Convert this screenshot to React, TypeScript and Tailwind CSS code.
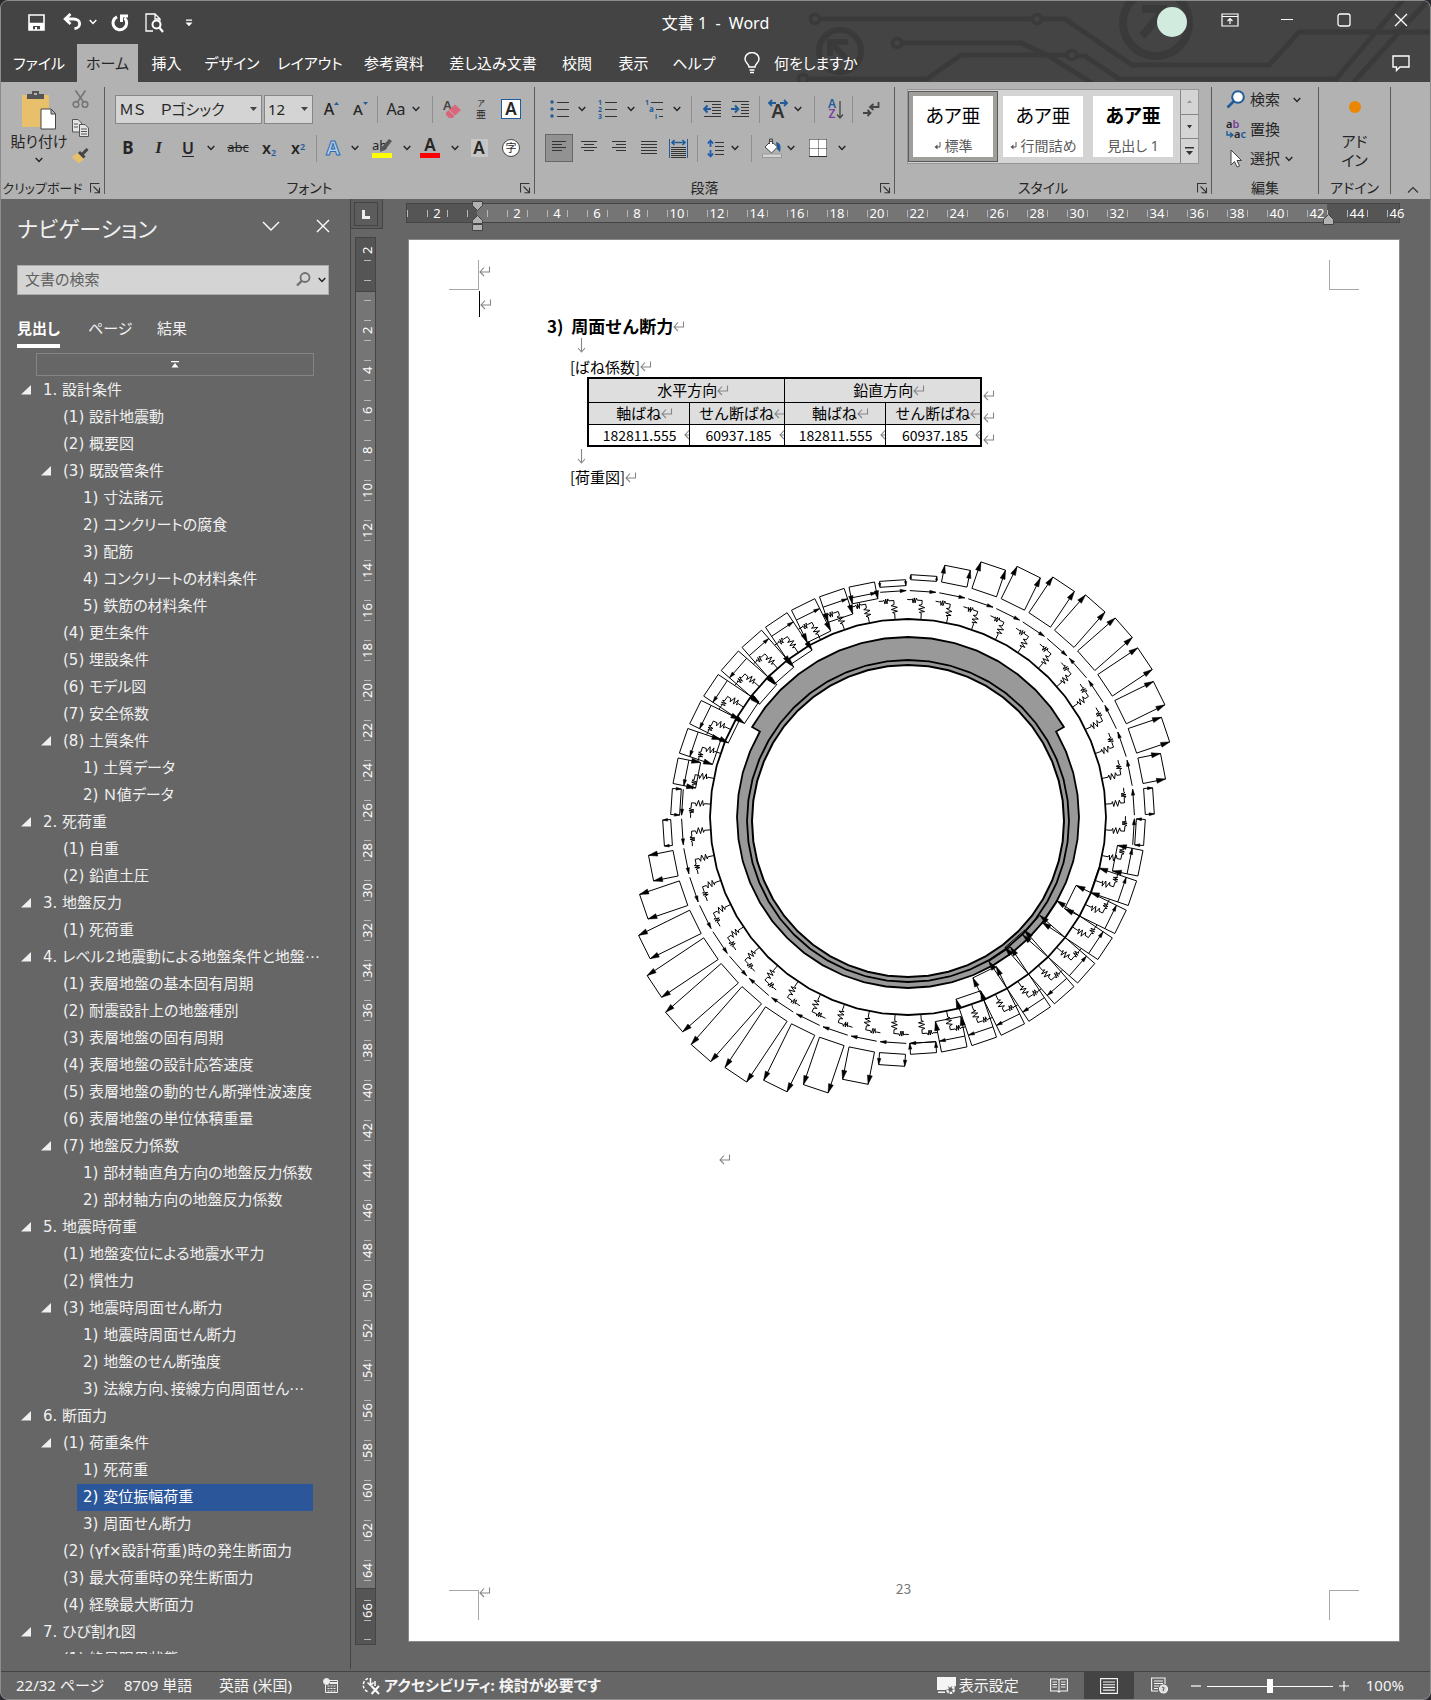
import React, { useState } from "react";

interface NavItem {
  level: number;
  text: string;
  open?: boolean;
}

const navItems: NavItem[] = [
  { level: 0, text: "1. 設計条件", open: true },
  { level: 1, text: "(1) 設計地震動" },
  { level: 1, text: "(2) 概要図" },
  { level: 1, text: "(3) 既設管条件", open: true },
  { level: 2, text: "1) 寸法諸元" },
  { level: 2, text: "2) コンクリートの腐食" },
  { level: 2, text: "3) 配筋" },
  { level: 2, text: "4) コンクリートの材料条件" },
  { level: 2, text: "5) 鉄筋の材料条件" },
  { level: 1, text: "(4) 更生条件" },
  { level: 1, text: "(5) 埋設条件" },
  { level: 1, text: "(6) モデル図" },
  { level: 1, text: "(7) 安全係数" },
  { level: 1, text: "(8) 土質条件", open: true },
  { level: 2, text: "1) 土質データ" },
  { level: 2, text: "2) Ｎ値データ" },
  { level: 0, text: "2. 死荷重", open: true },
  { level: 1, text: "(1) 自重" },
  { level: 1, text: "(2) 鉛直土圧" },
  { level: 0, text: "3. 地盤反力", open: true },
  { level: 1, text: "(1) 死荷重" },
  { level: 0, text: "4. レベル２地震動による地盤条件と地盤⋯", open: true },
  { level: 1, text: "(1) 表層地盤の基本固有周期" },
  { level: 1, text: "(2) 耐震設計上の地盤種別" },
  { level: 1, text: "(3) 表層地盤の固有周期" },
  { level: 1, text: "(4) 表層地盤の設計応答速度" },
  { level: 1, text: "(5) 表層地盤の動的せん断弾性波速度" },
  { level: 1, text: "(6) 表層地盤の単位体積重量" },
  { level: 1, text: "(7) 地盤反力係数", open: true },
  { level: 2, text: "1) 部材軸直角方向の地盤反力係数" },
  { level: 2, text: "2) 部材軸方向の地盤反力係数" },
  { level: 0, text: "5. 地震時荷重", open: true },
  { level: 1, text: "(1) 地盤変位による地震水平力" },
  { level: 1, text: "(2) 慣性力" },
  { level: 1, text: "(3) 地震時周面せん断力", open: true },
  { level: 2, text: "1) 地震時周面せん断力" },
  { level: 2, text: "2) 地盤のせん断強度" },
  { level: 2, text: "3) 法線方向、接線方向周面せん⋯" },
  { level: 0, text: "6. 断面力", open: true },
  { level: 1, text: "(1) 荷重条件", open: true },
  { level: 2, text: "1) 死荷重" },
  { level: 2, text: "2) 変位振幅荷重" },
  { level: 2, text: "3) 周面せん断力" },
  { level: 1, text: "(2) (γf×設計荷重)時の発生断面力" },
  { level: 1, text: "(3) 最大荷重時の発生断面力" },
  { level: 1, text: "(4) 経験最大断面力" },
  { level: 0, text: "7. ひび割れ図", open: true },
  { level: 1, text: "(1) 終局限界状態", open: true },
];

const tabs = [
  { name: "ファイル", width: "w-[76px]" },
  { name: "ホーム", width: "w-[61px]" },
  { name: "挿入", width: "w-[57px]" },
  { name: "デザイン", width: "w-[74px]" },
  { name: "レイアウト", width: "w-[82px]" },
  { name: "参考資料", width: "w-[86px]" },
  { name: "差し込み文書", width: "w-[112px]" },
  { name: "校閲", width: "w-[56px]" },
  { name: "表示", width: "w-[57px]" },
  { name: "ヘルプ", width: "w-[64px]" },
];

// Radial load per segment, clockwise from the crown. Negative = towards the pipe.
const loads = [
  5, 17, 28, 36, 43, 47, 50, 48, 43, 35, 23, 9,
  -9, -26, -40, -56, -67, -73, -75, -72, -64, -49, -31, -11,
  12, 33, 50, 63, 73, 77, 74, 68, 57, 42, 25, 8,
  -9, -23, -35, -43, -49, -51, -49, -45, -36, -27, -17, -6,
];

const CX = 908;
const CY = 817;

type Pt = [number, number];

// r = distance from centre, t = offset along the clockwise tangent
const polar = (deg: number, r: number, t = 0, cy = CY): Pt => {
  const a = (deg * Math.PI) / 180;
  return [
    CX + r * Math.sin(a) + t * Math.cos(a),
    cy - r * Math.cos(a) + t * Math.sin(a),
  ];
};

const line = (pts: Pt[]) => pts.map((p) => `${p[0].toFixed(1)},${p[1].toFixed(1)}`).join(" ");

const ring = (r: number, cy = CY) =>
  line(Array.from({ length: 48 }, (_, i) => polar(i * 7.5, r, 0, cy)));

const head = (from: Pt, to: Pt, size: number) => {
  const d = Math.hypot(to[0] - from[0], to[1] - from[1]) || 1;
  const ux = (to[0] - from[0]) / d;
  const uy = (to[1] - from[1]) / d;
  const bx = to[0] - ux * size;
  const by = to[1] - uy * size;
  const w = size * 0.28;
  return line([to, [bx - uy * w, by + ux * w], [bx + uy * w, by - ux * w]]);
};

const shellOuter = () => {
  const pts: Pt[] = [];
  for (let a = -60; a <= 60; a += 7.5) pts.push(polar(a, 180));
  for (let a = 60; a <= 300; a += 7.5) pts.push(polar(a, 171));
  return line(pts);
};

const LoadDiagram: React.FC = () => (
  <svg width="560" height="560" viewBox="620 550 560 560" fill="none" stroke="#000" strokeWidth="1" role="img" aria-label="荷重図">
    <polygon points={ring(198)} strokeWidth="1.8" />
    <polygon points={shellOuter()} fill="#999" strokeWidth="1.8" />
    <polygon points={ring(161, 821)} strokeWidth="1.8" />
    <polygon points={ring(156, 821)} fill="#fff" strokeWidth="2" />
    {loads.map((v, k) => {
      const a = 3.75 + k * 7.5;
      const base = 237;
      const l0 = polar(a, base, -13);
      const l1 = polar(a, base + v, -13);
      const r0 = polar(a, base, 13);
      const r1 = polar(a, base + v, 13);
      const size = Math.min(9, Math.abs(v) * 0.35 + 2);
      const cw = k < 6 || (k >= 18 && k < 30) || k >= 42;
      const s0 = polar(a, 226, cw ? -13 : 13);
      const s1 = polar(a, 226, cw ? 13 : -13);
      const spring: Pt[] = [
        [198, 0], [204, 0], [205, -2], [206, 3], [208, -3], [210, 3], [212, -3], [213, 0], [217, 0],
      ].map(([r, t]) => polar(a, r, t));
      const spring2: Pt[] = [
        [217, 0], [217, -5], [219, -6], [214, -7], [219, -8], [214, -9], [218, -10], [217, -11], [217, -15],
      ].map(([r, t]) => polar(a, r, t));
      return (
        <g key={k}>
          <polygon points={line([l0, l1, r1, r0])} />
          <polygon points={head(l0, l1, size)} fill="#000" strokeWidth="0.5" />
          <polygon points={head(r0, r1, size)} fill="#000" strokeWidth="0.5" />
          <polyline points={line([s0, s1])} />
          <polygon points={head(s0, s1, 6)} fill="#000" strokeWidth="0.5" />
          <polyline points={line(spring)} />
          <polyline points={line(spring2)} />
        </g>
      );
    })}
  </svg>
);

const Chevron: React.FC<{ className?: string }> = ({ className = "" }) => (
  <svg width="8" height="6" viewBox="0 0 8 6" fill="none" stroke="currentColor" strokeWidth="1.5" className={className}>
    <path d="M0.7 1 L4 4.4 L7.3 1" />
  </svg>
);

const Return: React.FC<{ className?: string }> = ({ className = "" }) => (
  <svg width="12" height="11" viewBox="0 0 12 11" fill="none" stroke="#868686" strokeWidth="1.1" className={`shrink-0 ${className}`}>
    <path d="M10.5 0.5 V6 H1 M5 1.5 L1 6 L5 10" />
  </svg>
);

const DownMark: React.FC = () => (
  <svg width="9" height="15" viewBox="0 0 9 15" fill="none" stroke="#868686" strokeWidth="1.1">
    <path d="M4.5 0 V14 M1 10 L4.5 14 L8 10" />
  </svg>
);

interface BtnProps {
  w: string;
  label: string;
  active?: boolean;
  children: React.ReactNode;
}

const Btn: React.FC<BtnProps> = ({ w, label, active, children }) => (
  <button
    aria-label={label}
    className={`${w} h-7 shrink-0 flex items-center justify-center ${active ? "bg-[#929292] border border-[#666]" : ""}`}
  >
    {children}
  </button>
);

const Sep: React.FC<{ w?: string }> = ({ w = "w-[9px]" }) => (
  <span className={`${w} shrink-0 flex justify-center`}>
    <span className="w-px h-[27px] bg-[#8e8e8e]" />
  </span>
);

const GroupLine: React.FC = () => <span className="w-px shrink-0 my-[5px] bg-[#5a5a5a]" />;

const Launcher: React.FC = () => (
  <button aria-label="オプション" className="absolute right-[3px] bottom-[5px]">
    <svg width="11" height="11" viewBox="0 0 11 11" fill="none" stroke="#333" strokeWidth="1.1">
      <path d="M0.5 9.5 V0.5 H9.5 M3.5 3.5 L9.5 9.5 M9.5 4.5 V9.8 H4.5" />
    </svg>
  </button>
);

const GroupLabel: React.FC<{ children: React.ReactNode; launcher?: boolean }> = ({ children, launcher }) => (
  <div className="relative mt-auto h-[22px] leading-[22px] text-sm text-center whitespace-nowrap">
    {children}
    {launcher && <Launcher />}
  </div>
);

// horizontal strokes of the alignment icons, as [x1, x2] pairs
const Lines: React.FC<{ rows: number[][]; step?: number }> = ({ rows, step = 3 }) => (
  <svg width="18" height="16" viewBox="0 0 18 16" stroke="#333" strokeWidth="1">
    {rows.map(([x1, x2], i) => (
      <path key={i} d={`M${x1} ${1.5 + i * step} H${x2}`} />
    ))}
  </svg>
);

const TitleArt: React.FC = () => (
  <svg width="640" height="81" viewBox="791 1 640 81" className="absolute right-0 top-0" fill="none" stroke="#3a3a3a" strokeWidth="5">
    <circle cx="816" cy="19" r="4.5" strokeWidth="3.5" />
    <path d="M821 19 H1033 M1042 19 H1066 L1133 65 H1270 L1300 32 H1431" />
    <circle cx="1038" cy="19" r="4.5" strokeWidth="3.5" />
    <circle cx="898" cy="43" r="4.5" strokeWidth="3.5" />
    <path d="M903 43 H1022 L1048 55 L1093 83" />
    <circle cx="804" cy="79" r="4.5" strokeWidth="3.5" />
    <path d="M809 79 H928 L962 55 H1068 M1078 56 H1086 L1120 79 H1337 L1404 0 M1354 83 L1431 -2" />
    <circle cx="1073" cy="55" r="4.5" strokeWidth="3.5" />
    <circle cx="841" cy="51" r="21" strokeWidth="6" />
    <path d="M831 56 V42 H849 M832 43 L850 61" strokeWidth="6" />
    <circle cx="1157" cy="23" r="33" strokeWidth="8" />
    <path d="M1143 9 H1168 M1163 13 L1143 36" strokeWidth="8" />
  </svg>
);

const TitleBar: React.FC = () => (
  <div className="relative h-[43px] flex items-center pl-[27px] text-white">
    <button aria-label="上書き保存" className="w-[35px]">
      <svg width="17" height="17" viewBox="0 0 17 17">
        <path d="M1 1 H16 V16 H1 Z M1 9.5 H16" fill="none" stroke="#fff" strokeWidth="1.6" />
        <path d="M1 10 H16 V16 H12 V12 H5 V16 H1 Z M7 13 H9 V16 H7 Z" fill="#fff" />
      </svg>
    </button>
    <button aria-label="元に戻す" className="w-[48px] -mt-[2px] flex items-center gap-[7px]">
      <svg width="19" height="17" viewBox="0 0 19 17" fill="none" stroke="#fff" strokeWidth="2.8">
        <path d="M7.5 1 L2.2 6 L7.5 11 M2 6 H10.5 C18.5 6 18.5 15 11.5 15.5" />
      </svg>
      <Chevron />
    </button>
    <button aria-label="繰り返し" className="w-[34px]">
      <svg width="18" height="18" viewBox="0 0 18 18" fill="none" stroke="#fff" strokeWidth="3">
        <path d="M6 2.8 A6.8 6.8 0 1 0 13.5 4 M10.5 8 V2 H17" />
      </svg>
    </button>
    <button aria-label="印刷プレビュー" className="w-[40px]">
      <svg width="19" height="20" viewBox="0 0 19 20" fill="none" stroke="#fff" strokeWidth="1.3">
        <path d="M8 18 H1 V1 H10 L15 6 V8 M10 1 V6 H15" />
        <circle cx="11.5" cy="11.5" r="4" strokeWidth="2" />
        <path d="M14.3 14.5 L18 19" strokeWidth="2.2" />
      </svg>
    </button>
    <button aria-label="カスタマイズ">
      <svg width="8" height="8" viewBox="0 0 8 8" fill="#fff">
        <path d="M1 0.5 H7 V1.7 H1 Z M0.5 3.5 H7.5 L4 7.3 Z" />
      </svg>
    </button>
    <div className="absolute inset-x-0 top-0 h-[45px] leading-[45px] text-center text-base whitespace-pre pointer-events-none">文書 1  -  Word</div>
    <div className="ml-auto flex items-center pr-[22px] pb-[5px]">
      <span className="size-[30px] rounded-full bg-[#d2ebdf] mt-[3px]" />
      <button aria-label="リボンの表示オプション" className="ml-[34px]">
        <svg width="18" height="14" viewBox="0 0 18 14" fill="none" stroke="#fff" strokeWidth="1.2">
          <path d="M1 1 H17 V13 H1 Z M1 3.5 H17 M9 11 V6 M6.5 8 L9 5.5 L11.5 8" />
        </svg>
      </button>
      <button aria-label="最小化" className="ml-[41px]">
        <svg width="14" height="14" viewBox="0 0 14 14" stroke="#fff" strokeWidth="1.2">
          <path d="M1 6.5 H13" />
        </svg>
      </button>
      <button aria-label="最大化" className="ml-[43px]">
        <svg width="14" height="14" viewBox="0 0 14 14" fill="none" stroke="#fff" strokeWidth="1.3">
          <rect x="1" y="1" width="12" height="12" rx="2" />
        </svg>
      </button>
      <button aria-label="閉じる" className="ml-[43px]">
        <svg width="14" height="14" viewBox="0 0 14 14" stroke="#fff" strokeWidth="1.3">
          <path d="M1 1 L13 13 M13 1 L1 13" />
        </svg>
      </button>
    </div>
  </div>
);

const TabBar: React.FC = () => (
  <div className="relative h-[38px] flex text-[15px] text-white">
    {tabs.map((t) => (
      <button
        key={t.name}
        className={`${t.width} shrink-0 whitespace-nowrap text-center ${t.name === "ホーム" ? "bg-[#b2b2b2] text-[#262626]" : ""}`}
      >
        {t.name}
      </button>
    ))}
    <button className="flex items-center gap-[14px] pl-[18px] whitespace-nowrap">
      <svg width="16" height="22" viewBox="0 0 16 22" fill="none" stroke="#fff" strokeWidth="1.5">
        <path d="M5 15 C5 12 1 11 1 7 A7 6.5 0 0 1 15 7 C15 11 11 12 11 15 Z M5.5 18 H10.5 M6 20.5 H10" />
      </svg>
      何をしますか
    </button>
    <button aria-label="コメント" className="ml-auto pr-5">
      <svg width="18" height="17" viewBox="0 0 18 17" fill="none" stroke="#fff" strokeWidth="1.4">
        <path d="M1 1 H17 V12 H8 L4.5 15.5 V12 H1 Z" />
      </svg>
    </button>
  </div>
);

const ClipboardGroup: React.FC = () => (
  <div className="w-[103px] shrink-0 flex flex-col">
    <div className="flex pt-[8px]">
      <button className="w-[68px] pl-[8px] flex flex-col items-center text-[15px] leading-[22px] whitespace-nowrap">
        <svg width="36" height="40" viewBox="0 0 36 40">
          <rect x="1" y="5" width="27" height="32" fill="#e8c06c" />
          <path d="M6 9 V4 H11 V1 H18 V4 H23 V9 Z" fill="#555" />
          <rect x="13" y="3" width="3" height="2" fill="#b2b2b2" />
          <path d="M20 19 H30 L34.5 23.5 V39 H20 Z M30 19 V24 H34.5" fill="#fff" stroke="#444" />
        </svg>
        貼り付け
        <Chevron className="mt-[5px]" />
      </button>
      <div className="flex flex-col items-center gap-[11px] w-[22px]">
        <button aria-label="切り取り">
          <svg width="17" height="18" viewBox="0 0 17 18" fill="none" stroke="#777" strokeWidth="1.7">
            <path d="M3.5 0.5 L11.5 12 M13.5 0.5 L5.5 12" />
            <circle cx="4" cy="14.5" r="2.8" />
            <circle cx="13" cy="14.5" r="2.8" />
          </svg>
        </button>
        <button aria-label="コピー">
          <svg width="17" height="18" viewBox="0 0 17 18" fill="#e4e4e4" stroke="#555">
            <path d="M0.5 0.5 H6 L9.5 4 V13 H0.5 Z" />
            <path d="M7.5 5.5 H13 L16.5 9 V17.5 H7.5 Z M9 10 H15 M9 12.5 H15 M9 15 H15 M2 5 H6 M2 8 H6" />
          </svg>
        </button>
        <button aria-label="書式のコピー">
          <svg width="18" height="16" viewBox="0 0 18 16">
            <path d="M7 5 L13 11 L8 15.5 L0.5 9 Z" fill="#e8c06c" />
            <path d="M8 4 L13.5 9.5 M11 6.5 L16.5 1" stroke="#444" strokeWidth="3" />
          </svg>
        </button>
      </div>
    </div>
    <GroupLabel launcher>
      <span className="text-[13px] pr-[20px]">クリップボード</span>
    </GroupLabel>
  </div>
);

const FontGroup: React.FC = () => (
  <div className="w-[429px] shrink-0 flex flex-col pt-[12px]">
    <div className="flex items-center h-[30px] pl-[10px]">
      <div className="relative w-[147px] shrink-0">
        <select aria-label="フォント" className="w-full h-[29px] appearance-none bg-[#d4d4d4] border border-[#868686] pl-[3px] text-[15px] leading-[27px]">
          <option>ＭＳ　Ｐゴシック</option>
        </select>
        <svg width="7" height="4" viewBox="0 0 7 4" className="absolute right-[5px] top-[12px] pointer-events-none"><path d="M0 0 H7 L3.5 4 Z" fill="#444" /></svg>
      </div>
      <div className="relative w-[49px] ml-[2px] shrink-0">
        <select aria-label="フォント サイズ" className="w-full h-[29px] appearance-none bg-[#d4d4d4] border border-[#868686] pl-[3px] text-[15px] leading-[27px]">
          <option>12</option>
        </select>
        <svg width="7" height="4" viewBox="0 0 7 4" className="absolute right-[5px] top-[12px] pointer-events-none"><path d="M0 0 H7 L3.5 4 Z" fill="#444" /></svg>
      </div>
      <span className="w-[4px]" />
      <Btn w="w-[29px]" label="フォントの拡大">
        <span className="text-base font-medium">A</span>
        <svg width="5" height="14" viewBox="0 0 5 14"><path d="M0 3 L2.5 0 L5 3 Z" fill="#1f5c99" /></svg>
      </Btn>
      <Btn w="w-[29px]" label="フォントの縮小">
        <span className="text-[15px] font-medium">A</span>
        <svg width="5" height="14" viewBox="0 0 5 14"><path d="M0 0 H5 L2.5 3 Z" fill="#1f5c99" /></svg>
      </Btn>
      <Sep w="w-[5px]" />
      <button className="w-[46px] flex items-center justify-center gap-[6px] text-base">Aa <Chevron /></button>
      <Sep w="w-[12px]" />
      <Btn w="w-[28px]" label="書式のクリア">
        <svg width="19" height="20" viewBox="0 0 19 20" className="overflow-visible">
          <text x="0" y="11" fontSize="13" fontWeight="600" fill="#444">A</text>
          <path d="M3 13.5 L12 5.5 L18 11 L9.5 19 H6 L3 16 Z" fill="#d9667a" />
          <path d="M6 11 L12 17" stroke="#b2b2b2" />
        </svg>
      </Btn>
      <Btn w="w-[30px]" label="ルビ">
        <span className="flex flex-col items-center">
          <span className="text-[8px] leading-[10px]">ア</span>
          <span className="text-[10px] leading-[13px]">亜</span>
        </span>
      </Btn>
      <Btn w="w-[30px]" label="囲み線">
        <span className="size-5 bg-white border border-[#1f5c99] text-[17px] leading-[18px] font-semibold">A</span>
      </Btn>
    </div>
    <div className="flex items-center h-[28px] pl-[8px] mt-[10px]">
      <Btn w="w-[30px]" label="太字"><span className="text-[17px] font-bold">B</span></Btn>
      <Btn w="w-[31px]" label="斜体"><span className="text-[17px] font-bold italic font-['Liberation_Serif',serif]">I</span></Btn>
      <Btn w="w-[28px]" label="下線"><span className="text-base font-semibold underline underline-offset-2">U</span></Btn>
      <Btn w="w-[18px]" label="下線の種類"><Chevron /></Btn>
      <Btn w="w-[36px]" label="取り消し線"><span className="text-[13px] line-through">abc</span></Btn>
      <Btn w="w-[26px]" label="下付き"><span className="text-base font-semibold">x<sub className="text-[9px] text-[#1f5c99]">2</sub></span></Btn>
      <Btn w="w-[32px]" label="上付き"><span className="text-base font-semibold">x<sup className="text-[9px] text-[#1f5c99]">2</sup></span></Btn>
      <Sep w="w-[5px]" />
      <Btn w="w-[28px]" label="文字の効果">
        <svg width="18" height="20" viewBox="0 0 18 20" className="overflow-visible">
          <text x="9" y="17" textAnchor="middle" fontSize="20" fontWeight="700" fill="#b9cfe6" stroke="#2a6cb5" strokeWidth="1">A</text>
        </svg>
      </Btn>
      <Btn w="w-[16px]" label="文字の効果の種類"><Chevron /></Btn>
      <Btn w="w-[38px]" label="蛍光ペンの色">
        <span className="relative flex flex-col w-5">
          <span className="text-[13px] leading-[14px] text-left">ab</span>
          <svg width="14" height="14" viewBox="0 0 14 14" className="absolute left-[6px] top-[1px]"><path d="M3 9 L11 0 L14 2 L7 11 L2 13 Z" fill="#555" /></svg>
          <span className="w-5 h-[5px] bg-[#ffff00] mt-px" />
        </span>
      </Btn>
      <Btn w="w-[11px]" label="蛍光ペンの種類"><Chevron /></Btn>
      <Btn w="w-[36px]" label="フォントの色">
        <span className="flex flex-col items-center w-5">
          <span className="text-[17px] leading-[14px] font-semibold">A</span>
          <span className="w-5 h-[5px] bg-[#ff0000] mt-px" />
        </span>
      </Btn>
      <Btn w="w-[13px]" label="フォントの色の種類"><Chevron /></Btn>
      <Btn w="w-[36px]" label="文字の網かけ">
        <span className="w-[17px] h-[18px] bg-[#c6c6c6] text-[17px] leading-[18px] font-semibold">A</span>
      </Btn>
      <Btn w="w-[28px]" label="囲い文字">
        <span className="size-[18px] rounded-full bg-white border border-[#444] text-[11px] leading-[16px]">字</span>
      </Btn>
    </div>
    <GroupLabel launcher><span className="pr-[20px]">フォント</span></GroupLabel>
  </div>
);

const ListIcon: React.FC<{ marks: string[] }> = ({ marks }) => (
  <svg width="19" height="20" viewBox="0 0 19 20" stroke="#333" strokeWidth="1" className="overflow-visible">
    {marks.map((m, i) =>
      m === "•" ? (
        <circle key={i} cx="2" cy={3 + i * 7} r="1.7" fill="#1f5c99" stroke="none" />
      ) : (
        <text key={i} x="0" y={6 + i * 7} fontSize="7" fontWeight="700" fill="#1f5c99" stroke="none">{m}</text>
      )
    )}
    <path d="M7 3.5 H19 M7 10.5 H19 M7 17.5 H19" />
  </svg>
);

const ParagraphGroup: React.FC = () => (
  <div className="w-[359px] shrink-0 flex flex-col pt-[12px]">
    <div className="flex items-center h-[30px] pl-[10px]">
      <Btn w="w-[28px]" label="箇条書き"><ListIcon marks={["•", "•", "•"]} /></Btn>
      <Btn w="w-[17px]" label="行頭文字"><Chevron /></Btn>
      <Btn w="w-[34px]" label="段落番号"><ListIcon marks={["1", "2", "3"]} /></Btn>
      <Btn w="w-[14px]" label="番号ライブラリ"><Chevron /></Btn>
      <Btn w="w-[32px]" label="アウトライン">
        <svg width="19" height="20" viewBox="0 0 19 20" stroke="#333" className="overflow-visible">
          <text x="0" y="6" fontSize="7" fontWeight="700" fill="#1f5c99" stroke="none">1</text>
          <text x="4" y="13" fontSize="8" fontWeight="700" fill="#1f5c99" stroke="none">a</text>
          <text x="10" y="20" fontSize="7" fontWeight="700" fill="#1f5c99" stroke="none">i</text>
          <path d="M6 3.5 H18 M11 10.5 H18 M14 17.5 H18" />
        </svg>
      </Btn>
      <Btn w="w-[14px]" label="アウトラインの種類"><Chevron /></Btn>
      <Sep w="w-[14px]" />
      <Btn w="w-[28px]" label="インデントを減らす">
        <svg width="19" height="18" viewBox="0 0 19 18" stroke="#333">
          <path d="M1 1.5 H18 M9 4.5 H18 M9 7.5 H18 M9 10.5 H18 M9 13.5 H18 M1 16.5 H18" />
          <path d="M8 9 H1.5 M4.5 5.5 L1.2 9 L4.5 12.5" fill="none" stroke="#1f5c99" strokeWidth="2" />
        </svg>
      </Btn>
      <Btn w="w-[29px]" label="インデントを増やす">
        <svg width="19" height="18" viewBox="0 0 19 18" stroke="#333">
          <path d="M1 1.5 H18 M10 4.5 H18 M10 7.5 H18 M10 10.5 H18 M10 13.5 H18 M1 16.5 H18" />
          <path d="M0 9 H7 M4 5.5 L7.3 9 L4 12.5" fill="none" stroke="#1f5c99" strokeWidth="2" />
        </svg>
      </Btn>
      <Sep w="w-[9px]" />
      <Btn w="w-[28px]" label="拡張書式">
        <svg width="20" height="19" viewBox="0 0 20 19" fill="none" className="overflow-visible">
          <path d="M1 3 H8 M12 3 H19 M4 0 L1 3 L4 6 M16 0 L19 3 L16 6" stroke="#1f5c99" strokeWidth="1.8" />
          <text x="10" y="18" textAnchor="middle" fontSize="19" fontWeight="600" fill="#333">A</text>
        </svg>
      </Btn>
      <Btn w="w-[12px]" label="拡張書式の種類"><Chevron /></Btn>
      <Sep w="w-[21px]" />
      <Btn w="w-[22px]" label="並べ替え">
        <span className="flex items-center">
          <span className="flex flex-col text-[12px] leading-[10px] font-semibold">
            <span className="text-[#1f5c99]">A</span>
            <span className="text-[#7b3f9e]">Z</span>
          </span>
          <svg width="8" height="19" viewBox="0 0 8 19" fill="none" stroke="#444" strokeWidth="1.3">
            <path d="M4 1 V18 M1 14.5 L4 18 L7 14.5" />
          </svg>
        </span>
      </Btn>
      <Sep w="w-[11px]" />
      <Btn w="w-[26px]" label="編集記号の表示">
        <svg width="18" height="16" viewBox="0 0 18 16" fill="none" stroke="#444" strokeWidth="1.8">
          <path d="M16.5 1 V6 H8.5 M11.5 3 L8 6 L11.5 9 M1 12 H8 M5.5 9 L8.5 12 L5.5 15" />
        </svg>
      </Btn>
    </div>
    <div className="flex items-center h-[28px] pl-[10px] mt-[10px]">
      <Btn w="w-[28px]" label="左揃え" active><Lines rows={[[2, 16], [2, 12], [2, 16], [2, 12]]} /></Btn>
      <Btn w="w-[31px]" label="中央揃え"><Lines rows={[[1, 17], [4, 14], [1, 17], [4, 14]]} /></Btn>
      <Btn w="w-[30px]" label="右揃え"><Lines rows={[[2, 16], [6, 16], [2, 16], [6, 16]]} /></Btn>
      <Btn w="w-[30px]" label="両端揃え"><Lines rows={[[1, 17], [1, 17], [1, 17], [1, 17], [1, 17]]} /></Btn>
      <Btn w="w-[29px]" label="均等割り付け">
        <svg width="19" height="19" viewBox="0 0 19 19" fill="none" stroke="#333">
          <path d="M0.5 0 V19 M18.5 0 V19" stroke="#1f5c99" />
          <path d="M3 3.5 H16 M5.5 1 L3 3.5 L5.5 6 M13.5 1 L16 3.5 L13.5 6" stroke="#1f5c99" strokeWidth="1.6" />
          <path d="M2 8.5 H17 M2 10.5 H17 M2 12.5 H17 M2 14.5 H17 M2 16.5 H17 M2 18.5 H17" />
        </svg>
      </Btn>
      <Sep w="w-[9px]" />
      <Btn w="w-[27px]" label="行と段落の間隔">
        <svg width="18" height="19" viewBox="0 0 18 19" fill="none" stroke="#333">
          <path d="M3.5 2 V8 M3.5 11 V17 M0.8 4.5 L3.5 1.5 L6.2 4.5 M0.8 14.5 L3.5 17.5 L6.2 14.5" stroke="#1f5cb0" strokeWidth="1.8" />
          <path d="M8 3.5 H17 M8 7.5 H17 M8 11.5 H17 M8 15.5 H17" />
        </svg>
      </Btn>
      <Btn w="w-[12px]" label="行間の種類"><Chevron /></Btn>
      <Sep w="w-[20px]" />
      <Btn w="w-[22px]" label="塗りつぶし">
        <svg width="20" height="20" viewBox="0 0 20 20">
          <path d="M14 4 C19 5 19 9 18 14 L15 11 Z" fill="#1f5c99" />
          <path d="M9 3 L15.5 9 L9.5 15 L3 9 Z" fill="#fff" stroke="#444" />
          <path d="M7.5 6 V1 H10.5 V6" fill="none" stroke="#444" />
          <rect x="0.5" y="16" width="19" height="3.5" fill="#d4d4d4" stroke="#999" />
        </svg>
      </Btn>
      <Btn w="w-[16px]" label="塗りつぶしの種類"><Chevron /></Btn>
      <Btn w="w-[38px]" label="罫線">
        <svg width="18" height="18" viewBox="0 0 18 18">
          <rect x="0.5" y="0.5" width="17" height="17" fill="#fff" />
          <path d="M0.5 0.5 H17.5 M0.5 0.5 V17.5 M17.5 0.5 V17.5 M9.5 0.5 V17.5 M0.5 9.5 H17.5" stroke="#333" strokeDasharray="1 1" />
          <path d="M0 17.5 H18" stroke="#333" />
        </svg>
      </Btn>
      <Btn w="w-[10px]" label="罫線の種類"><Chevron /></Btn>
    </div>
    <GroupLabel launcher><span className="pr-[20px]">段落</span></GroupLabel>
  </div>
);

const styleTiles = [
  { name: "標準", mark: true },
  { name: "行間詰め", mark: true },
  { name: "見出し 1", mark: false },
];

const StylesGroup: React.FC = () => {
  const [style, setStyle] = useState("標準");

  return (
    <div className="w-[316px] shrink-0 flex flex-col pt-[7px]">
      <div className="ml-[12px] w-[292px] h-[75px] flex bg-[#d4d4d4] border border-[#969696]">
        {styleTiles.map((t) => (
          <button
            key={t.name}
            onClick={() => setStyle(t.name)}
            className={`w-[90px] h-[71px] mt-px shrink-0 p-[4px] border ${t.name === style ? "bg-[#a09e9b] border-[#5a5a5a]" : "border-transparent"}`}
          >
            <span className="h-[61px] bg-white flex flex-col items-center justify-between pt-[6px] pb-[2px] whitespace-nowrap">
              <span className={`text-[19px] leading-[28px] text-black ${t.mark ? "" : "font-semibold"}`}>あア亜</span>
              <span className="text-sm leading-[18px] text-[#5a5a5a] flex items-center gap-1">
                {t.mark && (
                  <svg width="7" height="8" viewBox="0 0 7 8"><path d="M6 0 V5 H3" fill="none" stroke="#555" /><path d="M3.5 2.5 L0.5 5 L3.5 7.5 Z" fill="#555" /></svg>
                )}
                {t.name}
              </span>
            </span>
          </button>
        ))}
        <div className="ml-auto w-[18px] flex flex-col border-l border-[#868686] divide-y divide-[#868686]">
          <button aria-label="上へ" className="flex-1 flex items-center justify-center"><svg width="5" height="4" viewBox="0 0 5 4"><path d="M0 3 L2.5 0 L5 3 Z" fill="#999" /></svg></button>
          <button aria-label="下へ" className="flex-1 flex items-center justify-center"><svg width="5" height="4" viewBox="0 0 5 4"><path d="M0 0 H5 L2.5 3.5 Z" fill="#333" /></svg></button>
          <button aria-label="その他" className="flex-1 flex items-center justify-center"><svg width="9" height="9" viewBox="0 0 9 9"><path d="M0 0 H9 V1.5 H0 Z M1 4 H8 L4.5 8 Z" fill="#333" /></svg></button>
        </div>
      </div>
      <GroupLabel launcher><span className="pr-[20px]">スタイル</span></GroupLabel>
    </div>
  );
};

const EditGroup: React.FC = () => (
  <div className="w-[106px] shrink-0 flex flex-col pt-[3px]">
    <div className="pl-[14px] text-[15px] flex flex-col">
      <button className="h-[29px] flex items-center gap-1">
        <svg width="20" height="19" viewBox="0 0 20 19"><circle cx="12" cy="7" r="5.8" fill="#fff" stroke="#1f5c99" strokeWidth="2" /><path d="M8 11 L1.5 17.5" stroke="#1f5c99" strokeWidth="2.6" /></svg>
        検索
        <Chevron className="ml-[9px]" />
      </button>
      <button className="h-[30px] flex items-center gap-1">
        <span className="relative w-5 flex flex-col text-[11px] leading-[10px] font-semibold">
          <span className="text-left">a<span className="text-[#7b3f9e]">b</span></span>
          <span className="text-right">a<span className="text-[#1f5c99]">c</span></span>
          <svg width="8" height="8" viewBox="0 0 8 8" fill="none" stroke="#1f5c99" strokeWidth="1.4" className="absolute left-0 bottom-0">
            <path d="M1 0 V4 H6 M4 1.5 L7 4 L4 6.5" />
          </svg>
        </span>
        置換
      </button>
      <button className="h-[29px] flex items-center gap-1">
        <svg width="20" height="19" viewBox="0 0 20 19"><path d="M5 1 V16 L8.5 12.5 L11 18 L13.5 17 L11 11.5 H15.5 Z" fill="#fff" stroke="#444" /></svg>
        選択
        <Chevron className="ml-px" />
      </button>
    </div>
    <GroupLabel>編集</GroupLabel>
  </div>
);

const AddinGroup: React.FC = () => (
  <div className="w-[71px] shrink-0 flex flex-col">
    <button className="flex flex-col items-center text-[15px] leading-[19px] pt-[19px] whitespace-nowrap">
      <span className="size-3 rounded-full bg-[#ea8600] mb-[19px]" />
      <span>アド</span>
      <span>イン</span>
    </button>
    <GroupLabel>アドイン</GroupLabel>
  </div>
);

const Ribbon: React.FC = () => (
  <div className="h-[117px] shrink-0 flex bg-[#b2b2b2] text-[#262626]">
    <ClipboardGroup />
    <GroupLine />
    <FontGroup />
    <GroupLine />
    <ParagraphGroup />
    <GroupLine />
    <StylesGroup />
    <GroupLine />
    <EditGroup />
    <GroupLine />
    <AddinGroup />
    <GroupLine />
    <button aria-label="リボンを折りたたむ" className="ml-auto self-end pr-[11px] pb-[5px]">
      <svg width="12" height="8" viewBox="0 0 12 8" fill="none" stroke="#333" strokeWidth="1.2"><path d="M1 6.5 L6 1.5 L11 6.5" /></svg>
    </button>
  </div>
);

const rowPad = ["pl-[20px]", "pl-[40px]", "pl-[60px]"];

const NavPane: React.FC = () => {
  const [current, setCurrent] = useState(41);

  return (
    <nav className="w-[350px] shrink-0 mb-[2px] flex flex-col border-r border-[#444] text-[#f0f0f0]">
      <div className="flex items-center pl-4 pr-5 h-[58px]">
        <h2 className="text-[22px] whitespace-nowrap">ナビゲーション</h2>
        <button aria-label="オプション" className="ml-auto mb-[4px]">
          <svg width="18" height="11" viewBox="0 0 18 11" fill="none" stroke="#fff" strokeWidth="1.4"><path d="M1 1 L9 9 L17 1" /></svg>
        </button>
        <button aria-label="閉じる" className="ml-[36px] mb-[4px]">
          <svg width="14" height="14" viewBox="0 0 14 14" stroke="#fff" strokeWidth="1.4"><path d="M1 1 L13 13 M13 1 L1 13" /></svg>
        </button>
      </div>
      <div className="relative ml-4 mr-[21px] mt-[8px]">
        <input
          type="text"
          aria-label="文書の検索"
          placeholder="文書の検索"
          className="w-full h-[30px] bg-[#d4d4d4] border border-[#ababab] pl-[7px] pb-[3px] text-[15px] placeholder:text-[#606060]"
        />
        <button aria-label="検索" className="absolute right-[3px] top-[7px] flex items-center gap-[7px] text-[#222]">
          <svg width="15" height="15" viewBox="0 0 15 15" fill="none" stroke="#707070" strokeWidth="1.8"><circle cx="9" cy="5.5" r="4.5" /><path d="M5.8 8.8 L1 13.5" strokeWidth="2.4" /></svg>
          <Chevron />
        </button>
      </div>
      <div className="flex items-end pl-4 mt-[20px] h-[33px] text-[15px] whitespace-nowrap">
        <button className="w-[43px] h-[33px] pb-[4px] leading-[22px] font-bold border-b-4 border-white text-white">見出し</button>
        <button className="w-[36px] ml-[28px] h-[33px] pb-[8px] leading-[22px]">ページ</button>
        <button className="w-[30px] ml-[33px] h-[33px] pb-[8px] leading-[22px]">結果</button>
      </div>
      <button aria-label="先頭の見出しへ" className="mt-[5px] ml-[35px] mr-[36px] h-[23px] shrink-0 border border-[#858585] flex items-center justify-center">
        <svg width="8" height="7" viewBox="0 0 8 7" fill="#fff"><path d="M0 0 H8 V1.2 H0 Z M4 2 L7.5 6.5 H0.5 Z" /></svg>
      </button>
      <ul className="flex-1 min-h-0 mt-px mb-[15px] overflow-hidden pr-[37px] text-[15px] font-['DejaVu_Sans','Noto_Sans_CJK_JP',sans-serif]">
        {navItems.map((item, i) => (
          <li key={i} className={rowPad[item.level]}>
            <div className="flex items-center h-[27px]">
              <span className="w-[16px] shrink-0 pb-[2px] text-[#f0f0f0]">
                {item.open && (
                  <svg width="10" height="10" viewBox="0 0 10 10" fill="currentColor"><path d="M10 0 V9.5 H0 Z" /></svg>
                )}
              </span>
              <button
                onClick={() => setCurrent(i)}
                className={`flex-1 h-[27px] leading-[27px] pl-[6px] text-left whitespace-nowrap ${i === current ? "bg-[#2b579a] text-white" : ""}`}
              >
                {item.text}
              </button>
            </div>
          </li>
        ))}
      </ul>
    </nav>
  );
};

const hRuler = ["2", "", ...Array.from({ length: 23 }, (_, i) => String((i + 1) * 2))];
const vRuler = ["2", "", ...Array.from({ length: 33 }, (_, i) => String((i + 1) * 2))];

const VerticalRuler: React.FC = () => (
  <div className="w-[21px] ml-1 mt-[8px] h-[1408px] overflow-hidden flex flex-col items-center pl-[3px] border border-[#444] bg-[linear-gradient(to_bottom,#555_0_53px,#444_53px_54px,#757575_54px_1350px,#444_1350px_1351px,#555_1351px)] text-white text-[13px]">
    {vRuler.map((n, i) => (
      <div key={i} className={`shrink-0 flex flex-col justify-end items-center pb-[9px] ${i === 0 ? "h-[32px]" : "h-10"}`}>
        {i > 0 && <span className="w-[7px] h-px bg-[#b8b8b8]" />}
        <span className="h-[19px] leading-[15px] flex justify-center [writing-mode:vertical-rl] rotate-180">{n}</span>
        <span className="w-[7px] h-px bg-[#b8b8b8]" />
      </div>
    ))}
    <span className="w-[7px] h-px mt-[9px] shrink-0 bg-[#b8b8b8]" />
  </div>
);

const HorizontalRuler: React.FC = () => (
  <div className="relative mt-[4px] ml-[23px] mr-[30px]">
    <div className="h-5 flex items-center border border-[#444] bg-[linear-gradient(to_right,#555_0_70px,#757575_70px_calc(100%-72px),#555_calc(100%-72px))] text-white text-[13px]">
      <span className="w-[10px] shrink-0"><span className="block w-px h-[7px] bg-[#b8b8b8]" /></span>
      {hRuler.map((n, i) => (
        <div key={i} className="w-10 shrink-0 flex items-center justify-center">
          <span className="w-px h-[7px] bg-[#b8b8b8]" />
          <span className="w-[19px] text-center leading-[18px]">{n}</span>
          <span className={`w-px h-[7px] ${i < hRuler.length - 1 ? "bg-[#b8b8b8]" : ""}`} />
        </div>
      ))}
    </div>
    <svg width="11" height="30" viewBox="0 0 11 30" className="absolute left-[66px] -top-[2px]" fill="#b2b2b2" stroke="#444">
      <path d="M0.5 0.5 H10.5 V4.5 L5.5 9.5 L0.5 4.5 Z M5.5 14.5 L10.5 19.5 V22.5 H0.5 V19.5 Z M0.5 23.5 H10.5 V29.5 H0.5 Z" />
    </svg>
    <svg width="11" height="11" viewBox="0 0 11 11" className="absolute right-[66px] top-[11px]" fill="#b2b2b2" stroke="#444">
      <path d="M5.5 0.5 L10.5 5.5 V10.5 H0.5 V5.5 Z" />
    </svg>
  </div>
);

const SpringTable: React.FC = () => (
  <div className="flex ml-[178px]">
    <table className="w-[393px] shrink-0 table-fixed border-collapse border-2 border-black text-[15px] leading-[20px] text-center whitespace-nowrap">
      <colgroup>
        <col className="w-[101px]" />
        <col className="w-[95px]" />
        <col className="w-[101px]" />
        <col className="w-[96px]" />
      </colgroup>
      <thead className="bg-[#dedede]">
        <tr className="h-[24px]">
          {["水平方向", "鉛直方向"].map((t) => (
            <th key={t} colSpan={2} className="border border-black font-normal p-0">
              <span className="flex items-center justify-center pl-[14px]">{t}<Return /></span>
            </th>
          ))}
        </tr>
        <tr className="h-[22px]">
          {["軸ばね", "せん断ばね", "軸ばね", "せん断ばね"].map((t, i) => (
            <th key={i} className="border border-black font-normal p-0 overflow-hidden">
              <span className="flex items-center justify-center pl-[12px]">{t}<Return /></span>
            </th>
          ))}
        </tr>
      </thead>
      <tbody>
        <tr className="h-[22px]">
          {["182811.555", "60937.185", "182811.555", "60937.185"].map((t, i) => (
            <td key={i} className="border border-black p-0 overflow-hidden text-sm leading-[20px]">
              <span className="flex items-center justify-end gap-[7px]">{t}<span className="w-[5px] overflow-hidden"><Return /></span></span>
            </td>
          ))}
        </tr>
      </tbody>
    </table>
    <div className="flex flex-col gap-[11px] pt-[13px] pl-px">
      <Return />
      <Return />
      <Return />
    </div>
  </div>
);

const Page: React.FC = () => (
  <article className="ml-[25px] mr-[30px] mt-[16px] h-[1403px] flex flex-col bg-white border border-[#8a8a8a] text-black font-['Noto_Sans_CJK_JP',sans-serif] [font-feature-settings:normal]">
    <header className="flex justify-between px-[40px] pt-[20px]">
      <div className="flex">
        <span className="size-[30px] border-r border-b border-[#a6a6a6]" />
        <Return className="mt-[6px]" />
      </div>
      <span className="size-[30px] border-l border-b border-[#a6a6a6]" />
    </header>
    <div className="flex pl-[70px] h-[26px]">
      <span className="w-px h-[26px] mt-px bg-black" />
      <Return className="mt-[9px]" />
    </div>
    <h3 className="flex items-center pl-[138px] h-[20px] text-[17px] leading-[20px] font-bold whitespace-pre">3)  周面せん断力<Return /></h3>
    <div className="pl-[168px] h-[20px] pt-[2px]"><DownMark /></div>
    <p className="flex items-center pl-[161px] h-[21px] text-[15px] leading-[20px]">[ばね係数]<Return /></p>
    <SpringTable />
    <div className="pl-[168px] h-[20px] pt-[2px]"><DownMark /></div>
    <p className="flex items-center pl-[161px] h-[20px] text-[15px] leading-[20px]">[荷重図]<Return /></p>
    <figure className="ml-[211px] mt-[63px]">
      <LoadDiagram />
    </figure>
    <div className="pl-[310px] mt-[44px]"><Return /></div>
    <footer className="mt-auto pb-[21px]">
      <div className="flex justify-between px-[40px]">
        <div className="flex">
          <span className="size-[30px] border-r border-t border-[#a6a6a6]" />
          <Return className="-mt-[3px]" />
        </div>
        <span className="-mt-[12px] mr-[13px] text-sm leading-[20px] text-[#777]">23</span>
        <span className="size-[30px] border-l border-t border-[#a6a6a6]" />
      </div>
    </footer>
  </article>
);

const StatusBar: React.FC = () => {
  const [zoom, setZoom] = useState(50);

  return (
    <footer className="h-[28px] shrink-0 flex items-center border-t border-[#444] pl-[15px] pr-[26px] text-[15px] text-[#f4f4f4] whitespace-nowrap">
      <span className="w-[108px]">22/32 ページ</span>
      <span className="w-[95px]">8709 単語</span>
      <span className="w-[104px]">英語 (米国)</span>
      <button aria-label="マクロの記録" className="w-[38px]">
        <svg width="16" height="16" viewBox="0 0 16 16" fill="none" stroke="#eee">
          <path d="M6 2.5 H14.5 V14.5 H2.5 V7" />
          <path d="M7 5 H14.5" strokeWidth="2" />
          <path d="M4.5 8 H13 M4.5 10.5 H13 M4.5 13 H13" strokeDasharray="2 1" />
          <circle cx="3.5" cy="3.5" r="3" fill="#eee" />
        </svg>
      </button>
      <button className="flex items-center gap-[3px] font-bold">
        <svg width="20" height="18" viewBox="0 0 20 18" fill="none" stroke="#fff" strokeWidth="1.5">
          <path d="M7 1.5 A7 7 0 0 0 8 15" strokeDasharray="3 1.5" />
          <path d="M9.5 1 V8 M6.5 5.5 L9.5 8.5 L12.5 5.5 M14 4 V9" />
          <path d="M10.5 9 L18 17 M18 9 L10.5 17" strokeWidth="2" />
        </svg>
        アクセシビリティ: 検討が必要です
      </button>
      <button className="ml-auto flex items-center gap-[3px]">
        <svg width="19" height="19" viewBox="0 0 19 19">
          <path d="M0 1 H19 V10 L8 14 H0 Z M1 15.5 H8 V17 H1 Z" fill="#f4f4f4" />
          <circle cx="13.5" cy="13.5" r="3.4" fill="#666" stroke="#f4f4f4" strokeWidth="2.4" strokeDasharray="2.6 0.9" />
        </svg>
        表示設定
      </button>
      <button aria-label="閲覧モード" className="ml-[31px]">
        <svg width="18" height="15" viewBox="0 0 18 15" fill="none" stroke="#f4f4f4" strokeWidth="1.1">
          <path d="M9 2 V14 M9 2 L7.5 1 H0.6 V13 H7.5 L9 14 L10.5 13 H17.4 V1 H10.5 Z M2.5 4 H7 M2.5 6.5 H7 M2.5 9 H7 M11 4 H15.5 M11 6.5 H15.5 M11 9 H15.5" />
        </svg>
      </button>
      <button aria-label="印刷レイアウト" className="ml-[16px] w-[50px] h-[27px] bg-[#444] flex items-center justify-center">
        <svg width="18" height="16" viewBox="0 0 18 16" fill="none" stroke="#f4f4f4" strokeWidth="1.1">
          <path d="M0.6 0.6 H17.4 V15.4 H0.6 Z M3 4 H15 M3 6.7 H15 M3 9.4 H15 M3 12.1 H15" />
        </svg>
      </button>
      <button aria-label="Web レイアウト" className="ml-[17px]">
        <svg width="17" height="17" viewBox="0 0 17 17" fill="none" stroke="#f4f4f4" strokeWidth="1.1">
          <path d="M7 14 H0.6 V1 H14 V7 M3 4 H12 M3 6.5 H12 M3 9 H8 M3 11.5 H7" />
          <circle cx="12.5" cy="12" r="4" fill="#ddd" />
          <path d="M11 10 L13 11 L12 14" stroke="#666" />
        </svg>
      </button>
      <button aria-label="縮小" className="ml-[23px]">
        <svg width="10" height="10" viewBox="0 0 10 10" stroke="#fff" strokeWidth="1.2"><path d="M0 5 H10" /></svg>
      </button>
      <input
        type="range"
        aria-label="ズーム"
        value={zoom}
        onChange={(e) => setZoom(Number(e.target.value))}
        className="ml-[6px] w-[126px] h-[14px] appearance-none bg-[linear-gradient(to_bottom,transparent_0_7px,#fff_7px_8px,transparent_8px)] [&::-webkit-slider-thumb]:appearance-none [&::-webkit-slider-thumb]:w-[6px] [&::-webkit-slider-thumb]:h-[14px] [&::-webkit-slider-thumb]:bg-white"
      />
      <button aria-label="拡大" className="ml-[6px]">
        <svg width="10" height="10" viewBox="0 0 10 10" stroke="#fff" strokeWidth="1.2"><path d="M0 5 H10 M5 0 V10" /></svg>
      </button>
      <button className="ml-[17px]">100%</button>
    </footer>
  );
};

const App: React.FC = () => (
  <div className="h-screen bg-[#2a2a2e]">
    <div className="h-full flex flex-col overflow-hidden rounded-lg border border-[#8c8c8c] bg-[#666] font-['Noto_Sans','Noto_Sans_CJK_JP',sans-serif] [font-feature-settings:'palt']">
      <div className="relative h-[81px] shrink-0 bg-[#444] overflow-hidden">
        <TitleArt />
        <TitleBar />
        <TabBar />
      </div>
      <Ribbon />
      <main className="flex-1 min-h-0 flex">
        <NavPane />
        <div className="w-[32px] shrink-0 flex flex-col">
          <div className="h-[30px] shrink-0 border-r border-b border-[#444] bg-[#5c5c5c] pt-[3px] pl-[3px]">
            <button aria-label="タブの種類" className="size-6 border border-[#444] flex items-center justify-center">
              <svg width="8" height="9" viewBox="0 0 8 9"><path d="M0 0 H3 V6 H8 V9 H0 Z" fill="#eee" /></svg>
            </button>
          </div>
          <VerticalRuler />
        </div>
        <div className="flex-1 min-w-0">
          <HorizontalRuler />
          <Page />
        </div>
      </main>
      <StatusBar />
    </div>
  </div>
);

export default App;
